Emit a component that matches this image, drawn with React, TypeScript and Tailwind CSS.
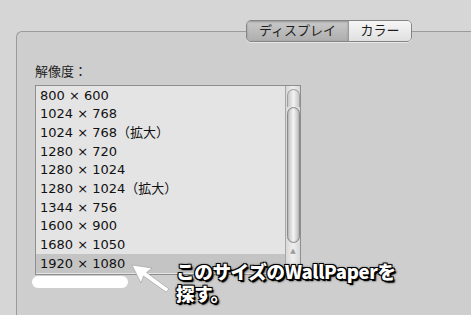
const rows = [
  '800 × 600',
  '1024 × 768',
  '1024 × 768（拡大）',
  '1280 × 720',
  '1280 × 1024',
  '1280 × 1024（拡大）',
  '1344 × 756',
  '1600 × 900',
  '1680 × 1050',
  '1920 × 1080',
];

const ui = "font-['DejaVu_Sans','Noto_Sans_CJK_JP',sans-serif]";

function Tabs() {
  return (
    <div className="absolute left-[229px] top-[-12px] flex h-[22px] overflow-hidden rounded-[5px] border border-[#858585] shadow-[0_1px_0_rgba(255,255,255,0.5)]">
      <div className="flex w-[101px] items-center justify-center bg-gradient-to-b from-[#c9c9c9] to-[#aeaeae] text-[13px] text-[#1e1e1e] shadow-[inset_0_1px_2px_rgba(0,0,0,0.25)]">
        ディスプレイ
      </div>
      <div className="w-px bg-[#9a9a9a]" />
      <div className="flex w-[62px] items-center justify-center bg-gradient-to-b from-[#f6f6f6] to-[#e0e0e0] text-[13px] text-[#1e1e1e]">
        カラー
      </div>
    </div>
  );
}

function Scrollbar() {
  return (
    <div className="flex w-[15px] flex-col items-center border-l border-[#a8a8a8] bg-gradient-to-r from-[#d8d8d8] via-[#eeeeee] to-[#d8d8d8] pt-[3px]">
      <div className="h-[18px] w-[13px] rounded-t-full border border-b-0 border-[#a0a0a0] bg-gradient-to-r from-[#c8c8c8] via-[#f2f2f2] to-[#c8c8c8]" />
      <div className="h-[136px] w-[13px] rounded-full border border-[#8a8a8a] bg-gradient-to-r from-[#c4c4c4] via-[#f4f4f4] to-[#bdbdbd] shadow-[inset_0_0_2px_rgba(0,0,0,0.2)]" />
      <div className="mt-[5px] text-[7px] leading-none text-[#9a9a9a]">▲</div>
    </div>
  );
}

export default function App() {
  return (
    <div className={`relative h-[315px] w-[471px] overflow-hidden bg-[#d6d6d6] ${ui}`}>
      <div className="pl-[16px] pt-[31px]">
        <div className="relative h-[290px] rounded-tl-[6px] border-l border-t border-[#9b9b9b] bg-[#cecece]">
          <Tabs />
          <div className="pl-[18px] pt-[31px]">
            <div className="h-[22px] text-[13px] leading-[18px] text-[#1e1e1e]">解像度：</div>
            <div className="flex h-[190px] w-[266px] border border-[#8e8e8e] bg-[#e4e4e4]">
              <div className="flex flex-1 flex-col">
                {rows.map((r, i) => (
                  <div
                    key={r}
                    className={`flex h-[18.7px] items-center pl-[4px] text-[13px] text-[#111] ${i === rows.length - 1 ? 'bg-[#c4c4c4]' : ''}`}
                  >
                    {r}
                  </div>
                ))}
              </div>
              <Scrollbar />
            </div>
          </div>
        </div>
      </div>

      {/* blanked item */}
      <div className="absolute left-[32px] top-[276px] h-[12px] w-[96px] rounded-full bg-white blur-[0.5px]" />

      {/* arrow */}
      <svg className="absolute left-[125px] top-[258px]" width="55" height="40" viewBox="0 0 55 40">
        <path
          d="M7 7 L27 10 L21.5 14.5 L44 31 L41 34 L18.5 18 L16 25 Z"
          fill="#fff"
          stroke="#9a9a9a"
          strokeWidth="0.6"
          strokeLinejoin="round"
        />
      </svg>

      {/* annotation */}
      <div className="absolute left-[176px] top-[260px] font-['Noto_Sans_CJK_JP',sans-serif] text-[18.5px] font-black leading-[22px] tracking-[-0.3px] text-white [text-shadow:0_0_1px_#000,1.5px_1.5px_0_#000,-1px_-1px_0_#000,1px_-1px_0_#000,-1px_1px_0_#000,2px_2px_2px_#000,0_0_3px_#000]">
        <div>このサイズのWallPaperを</div>
        <div>探す。</div>
      </div>
    </div>
  );
}
